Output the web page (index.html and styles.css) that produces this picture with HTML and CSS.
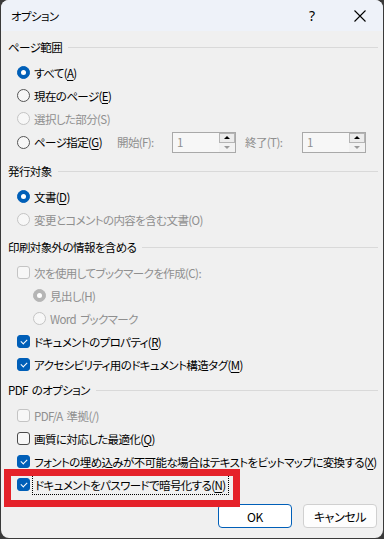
FILE: index.html
```html
<!DOCTYPE html>
<html lang="ja">
<head>
    <meta charset="UTF-8">
    <meta name="viewport" content="width=device-width, initial-scale=1.0">
    <title>オプション</title>
    <link rel="stylesheet" href="styles.css">
</head>
<body>
    <div class="dialog">
        <div class="titlebar">
            <span class="title">オプション</span>
            <span class="help">?</span>
            <span class="close">
                <svg width="12" height="12" viewBox="0 0 12 12"><path d="M0.5 0.5 L11.5 11.5 M11.5 0.5 L0.5 11.5" stroke="#000" stroke-width="1.1" fill="none"/></svg>
            </span>
        </div>

        <div class="content">
            <div class="group g1">
                <div class="group-head"><span>ページ範囲</span></div>
                <div class="row"><span class="radio on"></span><span>すべて(<u>A</u>)</span></div>
                <div class="row"><span class="radio"></span><span>現在のページ(<u>E</u>)</span></div>
                <div class="row off"><span class="radio"></span><span>選択した部分(S)</span></div>
                <div class="row spin-row">
                    <span class="radio"></span>
                    <span class="spin-main">ページ指定(<u>G</u>)</span>
                    <span class="spin-label off">開始(F):</span>
                    <span class="spin"><span class="spin-val">1</span><span class="spin-btns"><span class="up"></span><span class="down"></span></span></span>
                    <span class="spin-label second off">終了(T):</span>
                    <span class="spin"><span class="spin-val">1</span><span class="spin-btns"><span class="up"></span><span class="down"></span></span></span>
                </div>
            </div>

            <div class="group g2">
                <div class="group-head"><span>発行対象</span></div>
                <div class="row"><span class="radio on"></span><span>文書(<u>D</u>)</span></div>
                <div class="row off"><span class="radio"></span><span>変更とコメントの内容を含む文書(O)</span></div>
            </div>

            <div class="group g3">
                <div class="group-head"><span>印刷対象外の情報を含める</span></div>
                <div class="row off"><span class="check"></span><span>次を使用してブックマークを作成(C):</span></div>
                <div class="row sub off"><span class="radio on"></span><span>見出し(H)</span></div>
                <div class="row sub off"><span class="radio"></span><span>Word ブックマーク</span></div>
                <div class="row"><span class="check on"></span><span>ドキュメントのプロパティ(<u>R</u>)</span></div>
                <div class="row"><span class="check on"></span><span>アクセシビリティ用のドキュメント構造タグ(<u>M</u>)</span></div>
            </div>

            <div class="group g4">
                <div class="group-head"><span>PDF のオプション</span></div>
                <div class="row off"><span class="check"></span><span>PDF/A 準拠(/)</span></div>
                <div class="row"><span class="check"></span><span>画質に対応した最適化(<u>Q</u>)</span></div>
                <div class="row"><span class="check on"></span><span>フォントの埋め込みが不可能な場合はテキストをビットマップに変換する(<u>X</u>)</span></div>
                <div class="row"><span class="check on"></span><span class="focus">ドキュメントをパスワードで暗号化する(<u>N</u>)</span></div>
            </div>
        </div>

        <div class="footer">
            <button class="btn primary">OK</button>
            <button class="btn">キャンセル</button>
        </div>

        <div class="highlight"></div>
    </div>
</body>
</html>
```

FILE: styles.css
```css
* { box-sizing: border-box; }
body { margin: 0; background: #3a3a3a; font-family: "Noto Sans CJK JP", "Noto Sans", sans-serif; font-size: 11.5px; letter-spacing: -0.6px; word-spacing: 2px; color: #000; font-feature-settings: "palt"; }
u { text-decoration: underline; text-underline-offset: 2px; }

.dialog { position: relative; width: 382px; height: 538px; margin-left: 1px; background: #f0f0f0; border-radius: 8px; overflow: hidden; }

.titlebar { height: 31px; background: #eef2f9; display: flex; align-items: center; padding-left: 10px; }
.title { flex: 1; }
.help { width: 12px; font-family: "Noto Sans", sans-serif; font-size: 14px; letter-spacing: 0; margin-right: 36px; text-align: center; }
.close { width: 12px; height: 12px; margin-right: 17px; display: flex; }

.content { padding: 6px 5px 0 7px; }
.group { margin-bottom: 6px; }
.g1 { margin-bottom: 7px; }
.g3 { margin-bottom: 4px; }
.group-head { display: flex; align-items: center; height: 20px; margin-bottom: 4px; }
.group-head::after { content: ""; flex: 1; height: 1px; background: #d9d9d9; margin-left: 6px; }

.row { display: flex; align-items: center; height: 23px; padding-left: 9px; gap: 4px; white-space: nowrap; }
.row.sub { padding-left: 25px; }
.off { color: #8f8f8f; }

.radio { width: 13px; height: 13px; border-radius: 50%; border: 1px solid #555; background: #f7f7f7; flex: none; position: relative; }
.radio.on { background: #005fb8; border-color: #005fb8; }
.radio.on::after { content: ""; position: absolute; left: 3px; top: 3px; width: 5px; height: 5px; border-radius: 50%; background: #fff; }
.off .radio { border-color: #c4c4c4; }
.off .radio.on { background: #b5b5b5; border-color: #b5b5b5; }

.check { width: 13px; height: 13px; border-radius: 3px; border: 1px solid #4a4a4a; background: #f7f7f7; flex: none; position: relative; }
.check.on { background: #005fb8; border-color: #005fb8; }
.check.on::after { content: ""; position: absolute; left: 3px; top: 2px; width: 5px; height: 3px; border-left: 1.2px solid #fff; border-bottom: 1.2px solid #fff; transform: rotate(-45deg); transform-origin: center; margin-top: 1px; }
.off .check { border-color: #c4c4c4; }

.spin-row { height: 24px; }
.spin-main { width: 83px; }
.spin-label { width: 55px; margin-left: -4px; }
.spin-label.second { width: 66px; padding-left: 9px; }
.spin { width: 64px; height: 21px; border: 1px solid #a9a9a9; background: #f7f7f7; display: flex; align-items: center; justify-content: space-between; margin-left: -4px; }
.spin-val { color: #8f8f8f; padding-left: 4px; }
.spin-btns { width: 16px; height: 19px; display: flex; flex-direction: column; }
.up, .down { flex: 1; position: relative; }
.up { border: 1px solid #b4b4b4; background: #ececec; }
.down { background: #f2f2f2; }
.up::after, .down::after { content: ""; position: absolute; top: 2px; border-left: 3px solid transparent; border-right: 3px solid transparent; }
.up::after { border-bottom: 3px solid #000; left: 3.5px; }
.down::after { border-top: 3px solid #9a9a9a; top: 3px; left: 4.5px; }

.focus { outline: 1px dotted #000; outline-offset: 1px; padding: 0 1px; }

.footer { position: absolute; left: 0; right: 0; top: 504px; display: flex; justify-content: flex-end; gap: 11px; padding-right: 6px; }
.btn { width: 74px; height: 24px; border-radius: 4px; border: 1px solid #d0d0d0; background: #fdfdfd; font-family: inherit; font-size: 12px; letter-spacing: -0.4px; font-feature-settings: "palt"; color: #000; padding: 0; }
.btn.primary { border-color: #005fb8; background: #fff; }

.highlight { position: absolute; left: 3px; top: 469px; width: 236px; height: 38px; border: 7px solid #e5222a; }
```
